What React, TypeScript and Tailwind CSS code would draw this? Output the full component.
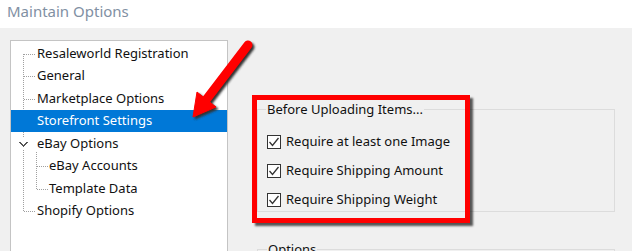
import React from "react";

const font = { fontFamily: '"Noto Sans", "Open Sans", sans-serif' };

type Node = { label: string; depth: number; selected?: boolean; expander?: boolean };

const nodes: Node[] = [
  { label: "Resaleworld Registration", depth: 0 },
  { label: "General", depth: 0 },
  { label: "Marketplace Options", depth: 0 },
  { label: "Storefront Settings", depth: 0, selected: true },
  { label: "eBay Options", depth: 0, expander: true },
  { label: "eBay Accounts", depth: 1 },
  { label: "Template Data", depth: 1 },
  { label: "Shopify Options", depth: 0 },
];

function TreeLines() {
  // dotted connectors of the tree view
  return (
    <svg className="absolute left-0 top-0" width="218" height="230" shapeRendering="crispEdges">
      <g stroke="#a0a0a0" strokeWidth="1" strokeDasharray="1 1">
        <line x1="12.5" y1="13" x2="12.5" y2="171" />
        <line x1="13" y1="13.5" x2="24" y2="13.5" />
        <line x1="13" y1="35.5" x2="24" y2="35.5" />
        <line x1="13" y1="58.5" x2="24" y2="58.5" />
        <line x1="13" y1="80.5" x2="24" y2="80.5" />
        <line x1="13" y1="170.5" x2="24" y2="170.5" />
        <line x1="25.5" y1="111" x2="25.5" y2="148" />
        <line x1="26" y1="125.5" x2="37" y2="125.5" />
        <line x1="26" y1="148.5" x2="37" y2="148.5" />
      </g>
      <rect x="7" y="97" width="12" height="12" fill="white" />
      <path d="M8.5 101 L12.5 105 L16.5 101" fill="none" stroke="#555" strokeWidth="1.4" />
    </svg>
  );
}

function Tree() {
  return (
    <div className="relative ml-[10px] h-[240px] w-[218px] border border-[#c4c4c4] bg-white pt-[1px]">
      <TreeLines />
      {nodes.map((n) => (
        <div
          key={n.label}
          className={`relative flex h-[22.5px] items-center text-[13px] leading-none ${
            n.selected ? "bg-[#0078d7] text-white" : "text-[#111]"
          } ${n.depth === 1 ? "pl-[38px]" : "pl-[26px]"}`}
        >
          {n.label}
        </div>
      ))}
    </div>
  );
}

function Check({ label }: { label: string }) {
  return (
    <div className="flex h-[29px] items-center gap-[5px]">
      <div className="flex h-[14px] w-[14px] items-center justify-center border border-[#333] bg-white">
        <svg width="12" height="12" viewBox="0 0 12 12">
          <path d="M1.5 6 L4.5 9.5 L10.5 2" fill="none" stroke="#333" strokeWidth="1.3" />
        </svg>
      </div>
      <span className="text-[13px] leading-none text-[#111]">{label}</span>
    </div>
  );
}

function Arrow() {
  return (
    <svg className="absolute left-0 top-0" width="632" height="251">
      <defs>
        <filter id="sh" x="-20%" y="-20%" width="140%" height="140%">
          <feGaussianBlur stdDeviation="1.2" />
        </filter>
      </defs>
      <g transform="translate(2 2)" filter="url(#sh)" fill="#333" stroke="#333">
        <line x1="248" y1="45" x2="206" y2="100" strokeWidth="9" strokeLinecap="round" />
        <polygon points="193,117 197,92 216,107" strokeWidth="1" />
      </g>
      <g fill="#f00" stroke="#f00">
        <line x1="248" y1="45" x2="206" y2="100" strokeWidth="9" strokeLinecap="round" />
        <polygon points="193,117 197,92 216,107" strokeWidth="1" strokeLinejoin="round" />
      </g>
    </svg>
  );
}

export default function App() {
  return (
    <div className="relative h-[251px] w-[632px] overflow-hidden bg-[#f0f0f0]" style={font}>
      <div className="h-[28px] bg-white pl-[7px] pt-[1px] text-[15px] leading-[20px] text-[#8190a3]">
        Maintain Options
      </div>
      <div className="flex pt-[12px]">
        <Tree />
        <div className="ml-[29px] mt-[61px] flex flex-col">
          <fieldset className="h-[111px] w-[358px] border border-[#dcdcdc]">
            <legend className="ml-[8px] px-[1px] text-[13px] leading-[16px] text-[#111]">
              Before Uploading Items...
            </legend>
            <div className="mt-[10px] flex flex-col pl-[9px]">
              <Check label="Require at least one Image" />
              <Check label="Require Shipping Amount" />
              <Check label="Require Shipping Weight" />
            </div>
          </fieldset>
          <fieldset className="mt-[29px] h-[60px] w-[358px] border border-[#dcdcdc]">
            <legend className="ml-[9px] px-[1px] text-[13px] leading-[16px] text-[#111]">Options</legend>
          </fieldset>
        </div>
      </div>
      <div className="absolute left-[252px] top-[95px] h-[128px] w-[218px] border-[5px] border-[#ff0000] shadow-[3px_3px_2px_rgba(0,0,0,0.65)]" />
      <Arrow />
    </div>
  );
}
